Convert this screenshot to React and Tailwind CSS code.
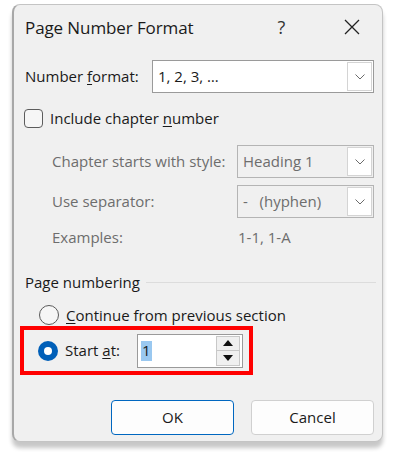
import React from "react";

function Chevron({ className = "" }) {
  return (
    <svg width="10" height="6" viewBox="0 0 10 6" className={className}>
      <path d="M0.5 0.5 L5 5 L9.5 0.5" fill="none" stroke="#6b6b6b" strokeWidth="1" />
    </svg>
  );
}

function Select({ value, disabled, className = "" }) {
  return (
    <div
      className={`flex items-stretch border ${disabled ? "border-[#b4b4b4] bg-[#f0f0f0] text-[#6d6d6d]" : "border-[#9a9a9a] bg-white text-[#1a1a1a]"} ${className}`}
    >
      <div className="flex-1 flex items-center pl-[5px] whitespace-pre">{value}</div>
      <div className="w-[25px] m-[1px] flex items-center justify-center bg-white border border-[#d4d4d4]">
        <Chevron />
      </div>
    </div>
  );
}

export default function App() {
  return (
    <div className="w-[394px] h-[454px] bg-white overflow-hidden" style={{ fontFamily: '"Open Sans", "Noto Sans", sans-serif' }}>
      <div className="ml-[12px] mt-[4px] w-[371px] h-[438px] bg-[#f0f0f0] border border-[#c4c4c4] border-l-[2px] border-l-[#a8a8a8] rounded-[8px] shadow-[0_6px_4px_rgba(0,0,0,0.22)] flex flex-col text-[15px] text-[#1a1a1a] leading-none">
        {/* Title bar */}
        <div className="h-[44px] flex items-center pl-[11px]">
          <div className="text-[17px] tracking-[-0.1px] whitespace-nowrap">Page Number Format</div>
          <div className="ml-[84px] text-[18px] text-[#333]">?</div>
          <div className="ml-[59px]">
            <svg width="16" height="16" viewBox="0 0 16 16">
              <path d="M1 1 L15 15 M15 1 L1 15" stroke="#222" strokeWidth="1.3" />
            </svg>
          </div>
        </div>

        {/* Number format */}
        <div className="mt-[11px] flex items-center pl-[11px]">
          <div className="w-[127px] whitespace-nowrap">
            Number <span className="underline underline-offset-2">f</span>ormat:
          </div>
          <Select value="1, 2, 3, …" className="w-[222px] h-[33px]" />
        </div>

        {/* Include chapter number */}
        <div className="mt-[16px] flex items-center pl-[10px]">
          <div className="w-[19px] h-[19px] rounded-[4px] border border-[#5c5c5c] bg-[#f6f6f6]" />
          <div className="ml-[7px] whitespace-nowrap">
            Include chapter <span className="underline underline-offset-2">n</span>umber
          </div>
        </div>

        {/* Chapter section */}
        <div className="mt-[17px] pl-[38px] text-[#6d6d6d]">
          <div className="flex items-center">
            <div className="w-[185px] whitespace-nowrap">Chapter starts with style:</div>
            <Select value="Heading 1" disabled className="w-[137px] h-[33px]" />
          </div>
          <div className="mt-[7px] flex items-center">
            <div className="w-[185px] whitespace-nowrap">Use separator:</div>
            <Select value="-   (hyphen)" disabled className="w-[137px] h-[33px]" />
          </div>
          <div className="mt-[12px] flex items-center">
            <div className="w-[186px]">Examples:</div>
            <div>1-1, 1-A</div>
          </div>
        </div>

        {/* Page numbering */}
        <div className="mt-[30px] flex items-center pl-[11px] pr-[6px]">
          <div className="whitespace-nowrap">Page numbering</div>
          <div className="flex-1 ml-[6px] h-px bg-[#dcdcdc]" />
        </div>

        <div className="mt-[15px] flex items-center pl-[25px]">
          <div className="w-[20px] h-[20px] rounded-full border border-[#5a5a5a] bg-[#f6f6f6]" />
          <div className="ml-[7px] whitespace-nowrap">
            <span className="underline underline-offset-2">C</span>ontinue from previous section
          </div>
        </div>

        <div className="mt-[1px] ml-[6px] w-[233px] h-[49px] border-[4px] border-[#ff0000] flex items-center pl-[14px]">
          <div className="w-[20px] h-[20px] shrink-0 rounded-full bg-[#005fb8] flex items-center justify-center">
            <div className="w-[8px] h-[8px] rounded-full bg-white" />
          </div>
          <div className="ml-[7px] w-[58px] shrink-0 whitespace-nowrap">
            Start <span className="underline underline-offset-2">a</span>t:
          </div>
          <div className="ml-[14px] w-[106px] h-[34px] shrink-0 border border-[#9a9a9a] bg-white flex items-center">
            <div className="ml-[3px] px-[1px] bg-[#9ac8f0] h-[20px] flex items-center">1</div>
            <div className="ml-auto mr-[2px] w-[24px] h-[30px] flex flex-col">
              <div className="flex-1 flex items-center justify-center bg-[#f0f0f0] border border-[#c8c8c8]">
                <svg width="10" height="6" viewBox="0 0 10 6"><path d="M0 6 L5 0 L10 6 Z" fill="#111" /></svg>
              </div>
              <div className="flex-1 flex items-center justify-center bg-[#f0f0f0] border border-[#c8c8c8] border-t-0">
                <svg width="10" height="6" viewBox="0 0 10 6"><path d="M0 0 L5 6 L10 0 Z" fill="#111" /></svg>
              </div>
            </div>
          </div>
        </div>

        {/* Buttons */}
        <div className="mt-[25px] flex pl-[97px] gap-[17px]">
          <div className="w-[123px] h-[35px] rounded-[4px] border border-[#0067c0] bg-[#fdfdfd] flex items-center justify-center">OK</div>
          <div className="w-[123px] h-[35px] rounded-[4px] border border-[#d0d0d0] bg-[#fdfdfd] flex items-center justify-center">Cancel</div>
        </div>
      </div>
    </div>
  );
}
